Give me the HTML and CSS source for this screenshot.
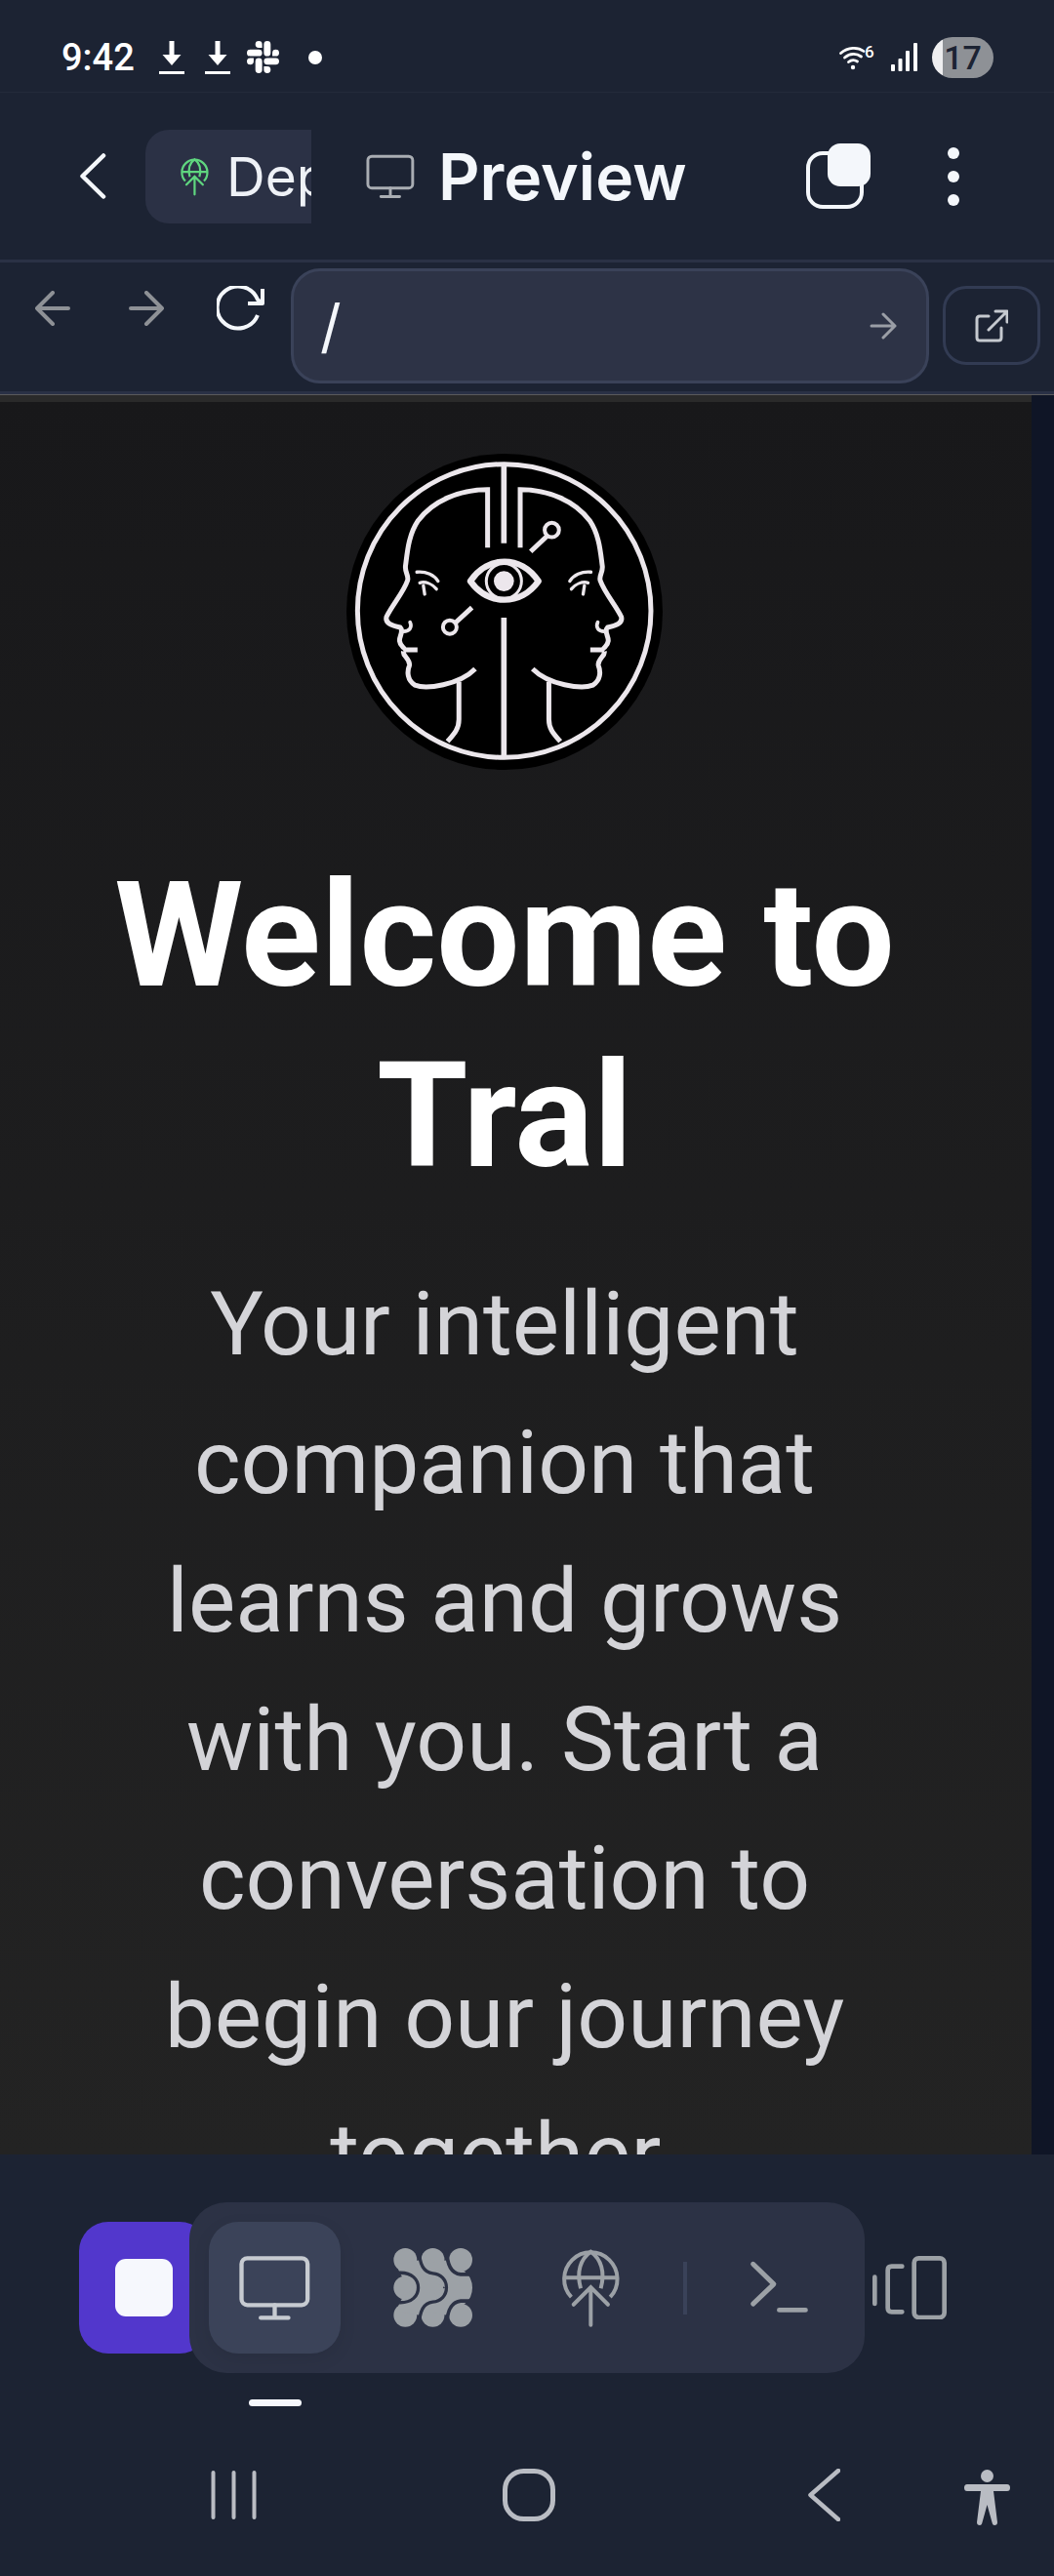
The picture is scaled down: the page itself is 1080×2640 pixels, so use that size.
FILE: index.html
```html
<!DOCTYPE html>
<html>
<head>
<title>Preview</title>
<link rel="stylesheet" href="styles.css">
</head>
<body>

<svg class="defs" width="0" height="0">
    <symbol id="deploy" viewBox="1180 218 195 250">
        <g fill="none" stroke="currentColor" stroke-linecap="round">
            <path stroke-linecap="butt" d="M1217 372A82 82 0 1 1 1337 372"/>
            <path stroke-linecap="butt" d="M1196 312H1358M1246 345C1232 295 1245 255 1277 232C1309 255 1322 295 1308 345"/>
            <path d="M1277 458V342M1224 395L1277 342L1330 395"/>
        </g>
    </symbol>
    <symbol id="monitor" viewBox="190 238 230 210">
        <g fill="none" stroke="currentColor" stroke-width="13" stroke-linecap="round">
            <rect x="203" y="251" width="203" height="144" rx="18"/>
            <path d="M305 395V434M262 434H347"/>
        </g>
    </symbol>
</svg>

<div class="phone">

    <div class="status-bar">
        <span class="time">9:42</span>
        <svg class="ic-down first" viewBox="0 0 26 35"><path d="M10.5 1h5v14h7L13 26 3.500 15h7zM0 32h26v3.500H0z"/></svg>
        <svg class="ic-down" viewBox="0 0 26 35"><path d="M10.5 1h5v14h7L13 26 3.500 15h7zM0 32h26v3.500H0z"/></svg>
        <svg class="ic-slack" viewBox="0 0 24 24"><path d="M5.042 15.165a2.528 2.528 0 0 1-2.52 2.523A2.528 2.528 0 0 1 0 15.165a2.527 2.527 0 0 1 2.522-2.52h2.52v2.52zM6.313 15.165a2.527 2.527 0 0 1 2.521-2.52 2.527 2.527 0 0 1 2.521 2.52v6.313A2.528 2.528 0 0 1 8.834 24a2.528 2.528 0 0 1-2.521-2.522v-6.313zM8.834 5.042a2.528 2.528 0 0 1-2.521-2.52A2.528 2.528 0 0 1 8.834 0a2.528 2.528 0 0 1 2.521 2.522v2.52H8.834zM8.834 6.313a2.528 2.528 0 0 1 2.521 2.521 2.528 2.528 0 0 1-2.521 2.521H2.522A2.528 2.528 0 0 1 0 8.834a2.528 2.528 0 0 1 2.522-2.521h6.312zM18.956 8.834a2.528 2.528 0 0 1 2.522-2.521A2.528 2.528 0 0 1 24 8.834a2.528 2.528 0 0 1-2.522 2.521h-2.522V8.834zM17.688 8.834a2.528 2.528 0 0 1-2.523 2.521 2.527 2.527 0 0 1-2.52-2.521V2.522A2.527 2.527 0 0 1 15.165 0a2.528 2.528 0 0 1 2.523 2.522v6.312zM15.165 18.956a2.528 2.528 0 0 1 2.523 2.522A2.528 2.528 0 0 1 15.165 24a2.527 2.527 0 0 1-2.52-2.522v-2.522h2.52zM15.165 17.688a2.527 2.527 0 0 1-2.52-2.523 2.526 2.526 0 0 1 2.52-2.52h6.313A2.527 2.527 0 0 1 24 15.165a2.528 2.528 0 0 1-2.522 2.523h-6.313z"/></svg>
        <span class="status-dot"></span>
        <svg class="ic-wifi" viewBox="0 0 37 27" fill="none" stroke="#fff" stroke-width="2.800" stroke-linecap="round">
            <path d="M1.500 9.500C9 3 19 3 25 7.500M5.500 14C11 9.500 17.500 9.500 22.500 13M9.500 18.500C12.500 16 15.500 16 18.500 18"/>
            <circle cx="14" cy="24" r="2.200" fill="#fff" stroke="none"/>
            <text x="26" y="14" class="wifi-six">6</text>
        </svg>
        <svg class="ic-signal" viewBox="0 0 27 29"><rect x="0" y="22" width="4" height="7" rx="1"/><rect x="7.500" y="16" width="4" height="13" rx="1"/><rect x="15" y="8" width="4" height="21" rx="1"/><rect x="23" y="0" width="4" height="29" rx="1"/></svg>
        <span class="battery">17</span>
    </div>

    <div class="top-bar">
        <svg class="ic-back" viewBox="0 0 27 47" fill="none" stroke="#f4f7fb" stroke-width="4.500" stroke-linecap="round" stroke-linejoin="round"><path d="M24 2.500L2.500 23.500L24 44.500"/></svg>
        <div class="tab-deploy">
            <svg class="ic-deploy-small"><use href="#deploy"/></svg>
            <span>Deploy</span>
        </div>
        <svg class="ic-monitor-top"><use href="#monitor"/></svg>
        <span class="tab-title">Preview</span>
        <svg class="ic-copy" viewBox="0 0 66 67" fill="none">
            <rect x="2" y="10" width="55" height="55" rx="15" stroke="#f4f7fb" stroke-width="4"/>
            <rect x="22" y="0" width="44" height="44" rx="13" fill="#f4f7fb"/>
        </svg>
        <div class="dots"><span></span><span></span><span></span></div>
    </div>

    <div class="url-bar">
        <svg class="ic-nav" viewBox="0 0 36 36" fill="none" stroke="#8e9196" stroke-width="4" stroke-linecap="round" stroke-linejoin="round"><path d="M34 18H2M18 2L2 18L18 34"/></svg>
        <svg class="ic-nav forward" viewBox="0 0 36 36" fill="none" stroke="#8e9196" stroke-width="4" stroke-linecap="round" stroke-linejoin="round"><path d="M2 18H34M18 2L34 18L18 34"/></svg>
        <svg class="ic-reload" viewBox="0 0 50 46" fill="none" stroke="#f4f7fb" stroke-width="4" stroke-linejoin="round"><path d="M42 30A21.500 21.500 0 1 1 42 14L47 18"/><path d="M32 18H47V3"/></svg>
        <div class="url-input">
            <span class="url-text">/</span>
            <svg class="ic-go" viewBox="0 0 28 28" fill="none" stroke="#9a9ea6" stroke-width="3" stroke-linecap="round" stroke-linejoin="round"><path d="M2 14H26M14 2L26 14L14 26"/></svg>
        </div>
        <div class="ext-btn">
            <svg class="ic-ext" viewBox="0 0 34 34" fill="none" stroke="#c5c9cf" stroke-width="3" stroke-linecap="round" stroke-linejoin="round"><path d="M14 7H5Q2 7 2 10V29Q2 32 5 32H24Q27 32 27 29V19"/><path d="M14 21L33 2M21 2H33V13"/></svg>
        </div>
    </div>

    <div class="viewport">
        <div class="page">
            <svg class="logo" viewBox="75 45 970 970">
                <circle cx="560" cy="530" r="485" fill="#000"/>
                <g fill="none" stroke="#ece7ec" stroke-width="15" stroke-linecap="round">
                    <circle cx="559" cy="527" r="450"/>
                    <path stroke-width="17" stroke-linecap="butt" d="M558 80V320M558 548V970"/>
                    <path stroke-linecap="butt" d="M508 333V155C420 155 340 190 295 250C265 295 262 345 256 390C254 410 268 420 262 435C250 470 215 510 198 545C192 565 215 572 240 578C252 590 236 605 238 620C240 640 260 640 250 650M250 647H293M250 652C246 665 272 675 268 695C260 715 262 740 285 755C320 768 420 755 470 705"/>
                    <path stroke-width="11" d="M270 562C278 578 268 590 250 590"/>
                    <path stroke-linecap="butt" d="M420 745V860C420 890 405 905 385 928"/>
                    <path stroke-width="10" d="M291 408C320 405 345 418 356 436M300 441C318 436 338 445 351 460M311 450L315 476"/>
                    <g transform="matrix(-1 0 0 1 1116 0)">
                        <path stroke-linecap="butt" d="M508 333V155C420 155 340 190 295 250C265 295 262 345 256 390C254 410 268 420 262 435C250 470 215 510 198 545C192 565 215 572 240 578C252 590 236 605 238 620C240 640 260 640 250 650M250 647H293M250 652C246 665 272 675 268 695C260 715 262 740 285 755C320 768 420 755 470 705"/>
                        <path stroke-width="11" d="M270 562C278 578 268 590 250 590"/>
                        <path stroke-linecap="butt" d="M420 745V860C420 890 405 905 385 928"/>
                        <path stroke-width="10" d="M291 408C320 405 345 418 356 436M300 441C318 436 338 445 351 460M311 450L315 476"/>
                    </g>
                    <path stroke-width="15" stroke-linecap="butt" d="M460 517L410 563M640 345L690 298"/>
                    <circle cx="392" cy="577" r="21" stroke-width="12"/>
                    <circle cx="705" cy="279" r="22" stroke-width="12"/>
                    <path stroke-width="19" stroke-linejoin="round" d="M455 436C510 356 610 356 664 436C610 512 510 512 455 436Z"/>
                    <circle cx="558" cy="436" r="54" stroke-width="9"/>
                    <circle cx="558" cy="436" r="31" fill="#ece7ec" stroke="none"/>
                </g>
            </svg>
            <h1>Welcome to Tral</h1>
            <p>Your intelligent companion that learns and grows with you. Start a conversation to begin our journey together.</p>
        </div>
        <div class="scroll-strip"></div>
    </div>

    <div class="bottom">
        <div class="dock">
            <div class="stop-btn"><span></span></div>
            <div class="tabs">
                <div class="tab active"><svg class="ic-monitor"><use href="#monitor"/></svg></div>
                <div class="tab">
                    <svg class="ic-cluster" viewBox="668 222 244 244">
                        <g fill="#9ca1a6">
                            <circle cx="705" cy="344" r="36"/>
                            <circle cx="876" cy="258" r="36"/>
                            <circle cx="876" cy="429" r="36"/>
                            <circle cx="705" cy="258" r="36"/>
                            <circle cx="705" cy="429" r="36"/>
                            <circle cx="790" cy="258" r="36"/>
                            <circle cx="790" cy="429" r="36"/>
                        </g>
                        <g fill="none" stroke="#9ca1a6" stroke-width="72">
                            <path d="M715 265C725 325 786 300 786 344C786 388 725 363 715 423"/>
                            <path d="M800 265C810 325 876 300 876 344C876 388 810 363 800 423"/>
                        </g>
                        <g fill="none" stroke="#2c3245" stroke-width="10">
                            <path d="M660 298H690C725 298 745 318 745 344C745 370 725 390 690 390H660"/>
                            <path d="M748 225C748 285 770 298 790 300C815 302 832 320 832 344C832 368 815 386 790 388C770 390 748 403 748 463"/>
                            <path stroke-width="11" d="M833 225C833 285 855 301 876 303H920M833 463C833 405 855 387 876 385H920"/>
                        </g>
                    </svg>
                </div>
                <div class="tab"><svg class="ic-deploy"><use href="#deploy"/></svg></div>
                <span class="tab-sep"></span>
                <div class="tab">
                    <svg class="ic-term" viewBox="320 230 190 170" fill="none" stroke="#9ca1a6" stroke-width="15" stroke-linecap="round" stroke-linejoin="round"><path d="M334 242L398 304L334 365M415 384H496"/></svg>
                </div>
            </div>
            <svg class="ic-devices" viewBox="695 215 240 195" fill="none" stroke="#9ca1a6" stroke-width="14" stroke-linecap="round" stroke-linejoin="round">
                <path d="M708 280V362M792 247H760Q748 247 748 259V375Q748 387 760 387H792"/>
                <rect x="829" y="222" width="93" height="182" rx="14"/>
            </svg>
        </div>
        <div class="indicator"></div>
        <div class="sys-nav">
            <svg class="ic-recent" viewBox="0 0 47 50" fill="none" stroke="#b9bcc3" stroke-width="4" stroke-linecap="round"><path d="M2.500 2V48M23.500 2V48M44.500 2V48"/></svg>
            <svg class="ic-home" viewBox="0 0 54 54" fill="none" stroke="#b9bcc3" stroke-width="5"><rect x="2.500" y="2.500" width="49" height="49" rx="19"/></svg>
            <svg class="ic-sysback" viewBox="0 0 33 54" fill="none" stroke="#b9bcc3" stroke-width="4.500" stroke-linecap="round" stroke-linejoin="round"><path d="M31 2L2.500 27L31 52"/></svg>
            <svg class="ic-person" viewBox="0 0 47 57" fill="#b9bcc3">
                <ellipse cx="23.500" cy="6.500" rx="6.500" ry="6.500"/>
                <path d="M3 15H44Q47 15 47 18.500Q47 22 44 22H30L34 54Q34 57 31 57Q29 57 28.500 54L23.500 36L18.500 54Q18 57 16 57Q13 57 13 54L17 22H3Q0 22 0 18.500Q0 15 3 15Z"/>
            </svg>
        </div>
    </div>

</div>

</body>
</html>
```

FILE: styles.css
```css
* {
    box-sizing: border-box;
}
body {
    margin: 0;
    background-color: #1c2333;
    font-family: Roboto, "Liberation Sans", sans-serif;
}
svg {
    display: block;
    flex: none;
}
.defs {
    position: absolute;
}
.phone {
    display: flex;
    flex-direction: column;
    width: 1080px;
    height: 2640px;
    overflow: hidden;
}

/* status bar */
.status-bar {
    display: flex;
    align-items: center;
    height: 95px;
    padding: 23px 62px 0 63px;
    border-bottom: 1px solid #232a3a;
    color: #fff;
    fill: #fff;
}
.time {
    font-size: 38px;
    font-weight: 500;
}
.ic-down {
    width: 26px;
    height: 35px;
    margin-left: 21px;
}
.ic-down.first {
    margin-left: 25px;
}
.ic-slack {
    width: 33px;
    height: 33px;
    margin-left: 17px;
}
.status-dot {
    width: 14px;
    height: 14px;
    margin-left: 30px;
    border-radius: 50%;
    background: #fff;
}
.ic-wifi {
    width: 37px;
    height: 27px;
    margin-left: auto;
    overflow: visible;
}
.wifi-six {
    font-size: 17px;
    font-weight: 500;
    fill: #fff;
    stroke: none;
}
.ic-signal {
    width: 27px;
    height: 29px;
    margin-left: 16px;
}
.battery {
    width: 63px;
    height: 42px;
    margin-left: 15px;
    border-radius: 21px;
    background: linear-gradient(90deg, #eeeef0 17%, #8e9196 17%);
    color: #1c2333;
    font-size: 34px;
    font-weight: 500;
    line-height: 42px;
    text-align: center;
}

/* tab row */
.top-bar {
    display: flex;
    align-items: center;
    height: 174px;
    padding: 0 97px 0 82px;
    border-bottom: 3px solid #2a3145;
    font-family: Inter, Roboto, sans-serif;
    color: #f4f7fb;
}
.ic-back {
    width: 27px;
    height: 47px;
    margin-right: 40px;
}
.tab-deploy {
    display: flex;
    align-items: center;
    width: 170px;
    height: 96px;
    padding-left: 35px;
    overflow: hidden;
    border-radius: 24px 0 0 24px;
    background: #2b3145;
    font-size: 55px;
    color: #eef1f6;
}
.ic-deploy-small {
    width: 31px;
    height: 40px;
    margin-right: 17px;
    color: #5fd67f;
    stroke-width: 14;
}
.ic-monitor-top {
    width: 52px;
    height: 48px;
    margin-left: 55px;
    margin-right: 23px;
    color: #a9adb3;
}
.tab-title {
    font-size: 66px;
    font-weight: 600;
}
.ic-copy {
    width: 66px;
    height: 67px;
    margin-left: auto;
}
.dots {
    display: flex;
    flex-direction: column;
    gap: 12px;
    margin-left: 79px;
}
.dots span {
    width: 12px;
    height: 12px;
    border-radius: 50%;
    background: #f4f7fb;
}

/* address row */
.url-bar {
    display: flex;
    align-items: center;
    height: 135px;
    padding: 0 14px 3px 36px;
    border-bottom: 3px solid #2a3145;
}
.ic-nav {
    width: 36px;
    height: 36px;
    margin-bottom: 36px;
}
.ic-nav.forward {
    margin-left: 60px;
}
.ic-reload {
    width: 50px;
    height: 46px;
    margin-left: 54px;
    margin-bottom: 36px;
}
.url-input {
    display: flex;
    align-items: center;
    justify-content: space-between;
    width: 656px;
    height: 118px;
    margin-left: 26px;
    padding: 0 30px 0 27px;
    border: 3px solid #3a4259;
    border-radius: 30px;
    background: #2d3346;
    color: #f4f7fb;
}
.url-text {
    font-family: Inter, sans-serif;
    font-size: 60px;
}
.ic-go {
    width: 28px;
    height: 28px;
}
.ext-btn {
    display: flex;
    align-items: center;
    justify-content: center;
    width: 100px;
    height: 81px;
    margin-left: 14px;
    border: 3px solid #323b53;
    border-radius: 24px;
}
.ic-ext {
    width: 34px;
    height: 34px;
}

/* web content */
.viewport {
    display: flex;
    flex: 1;
    min-height: 0;
    overflow: hidden;
    border-top: 1px solid #5a5a5c;
}
.page {
    width: 1057px;
    padding-top: 60px;
    padding-right: 23px;
    background: linear-gradient(#18181a, #232323);
    box-shadow: inset 0 7px 0 #2a2a2a;
    text-align: center;
}
.scroll-strip {
    flex: 1;
    background: #0f1526;
}
.logo {
    width: 324px;
    height: 324px;
    margin: 0 auto;
}
h1 {
    margin: 77px 0 0;
    color: #fff;
    font-size: 151px;
    font-weight: 700;
    line-height: 185px;
}
p {
    width: 820px;
    margin: 50px auto 0;
    color: #d4d4d8;
    font-size: 91px;
    line-height: 142px;
}

/* bottom dock */
.bottom {
    height: 432px;
    padding-top: 49px;
    background: #1c2333;
}
.dock {
    display: flex;
    align-items: center;
    padding-left: 81px;
}
.stop-btn {
    display: flex;
    align-items: center;
    justify-content: center;
    width: 133px;
    height: 135px;
    border-radius: 30px;
    background: #5237cc;
}
.stop-btn span {
    width: 59px;
    height: 59px;
    border-radius: 11px;
    background: #f6f8fd;
}
.tabs {
    display: flex;
    align-items: center;
    gap: 27px;
    height: 175px;
    margin-left: -20px;
    padding: 0 20px;
    border-radius: 38px;
    background: #2c3245;
}
.tab {
    display: flex;
    align-items: center;
    justify-content: center;
    width: 135px;
    height: 135px;
    border-radius: 30px;
}
.tab.active {
    background: #3b4359;
    box-shadow: 0 6px 18px rgba(0, 0, 0, 0.08);
}
.tab-sep {
    width: 4px;
    height: 54px;
    background: #3a4259;
}
.ic-monitor {
    width: 77px;
    height: 70px;
    color: #c7cbd1;
}
.ic-cluster {
    width: 81px;
    height: 81px;
}
.ic-deploy {
    width: 65px;
    height: 83px;
    color: #9ca1a6;
    stroke-width: 12;
}
.ic-term {
    width: 63px;
    height: 57px;
}
.ic-devices {
    width: 80px;
    height: 65px;
    margin-left: 6px;
}
.indicator {
    width: 54px;
    height: 7px;
    margin: 27px 0 0 255px;
    border-radius: 4px;
    background: #f6f8fd;
}
.sys-nav {
    display: flex;
    align-items: flex-start;
    margin-top: 64px;
    padding-left: 216px;
}
.ic-recent {
    width: 47px;
    height: 50px;
    margin-top: 2px;
}
.ic-home {
    width: 54px;
    height: 54px;
    margin-left: 252px;
}
.ic-sysback {
    width: 33px;
    height: 54px;
    margin-left: 259px;
}
.ic-person {
    width: 47px;
    height: 57px;
    margin-left: 127px;
    margin-top: 1px;
}
```
